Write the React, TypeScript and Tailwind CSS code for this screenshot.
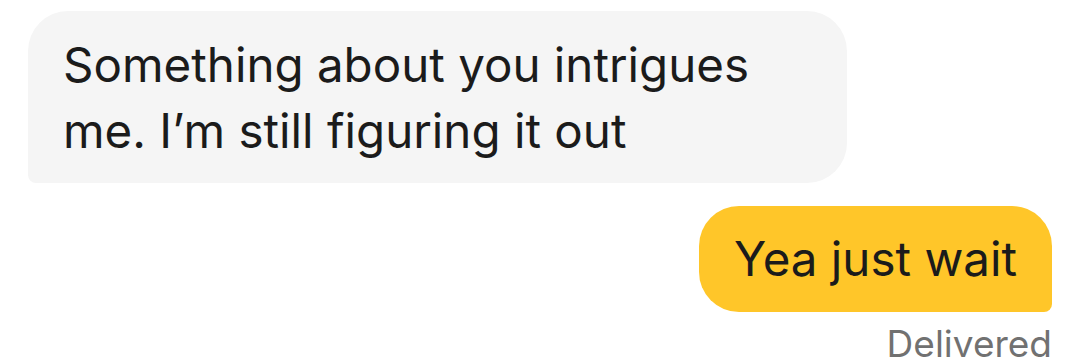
import React from 'react';

const font = { fontFamily: 'Inter, "Noto Sans", sans-serif' };

export default function App() {
  return (
    <div className="w-[1080px] h-[359px] overflow-hidden bg-white flex flex-col pt-[11px] px-[28px]" style={font}>
      {/* incoming */}
      <div className="shrink-0 self-start w-[819px] h-[172px] bg-[#f5f5f5] rounded-[40px] rounded-bl-[8px] pl-[35px] pr-[40px] pt-[21px]">
        <p className="w-[720px] text-[47.5px] leading-[66px] text-[#1b1b1b]">
          Something about you intrigues me. I’m still figuring it out
        </p>
      </div>

      {/* outgoing */}
      <div className="shrink-0 self-end mt-[23px] h-[106px] bg-[#ffc629] rounded-[40px] rounded-br-[8px] px-[35px] flex items-center">
        <p className="text-[47.5px] leading-[66px] text-[#1b1b1b]">Yea just wait</p>
      </div>
      <div className="shrink-0 self-end mt-[12px] text-[37px] leading-[40px] text-[#717171]">Delivered</div>
    </div>
  );
}
